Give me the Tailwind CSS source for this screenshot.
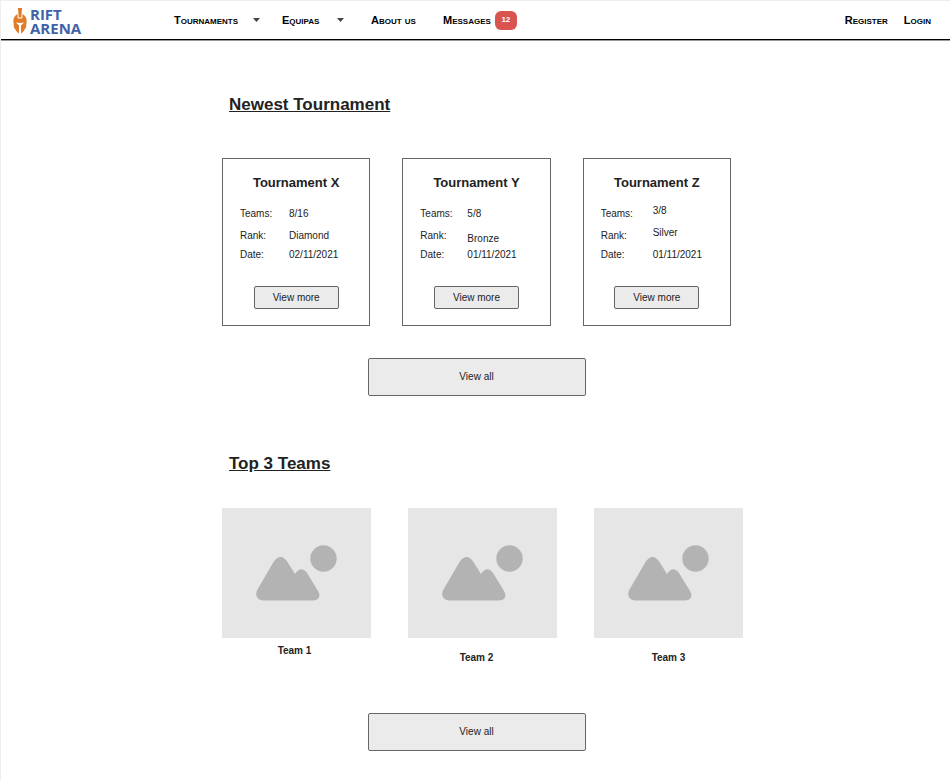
<!DOCTYPE html>
<html lang="en">
<head>
<meta charset="utf-8">
<meta name="viewport" content="width=device-width, initial-scale=1">
<title>Rift Arena</title>
<script src="https://cdn.jsdelivr.net/npm/@tailwindcss/browser@4"></script>
</head>
<body class="min-h-screen border-l border-t border-[#eeeeee] bg-white font-['Liberation_Sans',Arial,sans-serif] text-[10px] leading-4 text-[#222222]">
<svg class="hidden" aria-hidden="true">
  <symbol id="placeholder" viewBox="0 0 149 130">
    <rect width="149" height="130" fill="#e6e6e6"/>
    <circle cx="101.500" cy="50.500" r="13.200" fill="#b3b3b3"/>
    <path fill="#b3b3b3" d="M42 92.500C35 92.500 32.500 87 35.500 81.500L51.500 54Q58.500 44 65.500 54L73 66Q79 57 85 65L96 83C99 88 97 92.500 91 92.500Z"/>
  </symbol>
</svg>

<header class="flex h-[39px] items-center border-b border-black pr-[19px] pl-3 text-[11px] font-bold text-black shadow-[0_1px_0_#999999] [font-variant:small-caps]">
  <a href="#" aria-label="Rift Arena" class="flex w-[161px] shrink-0 items-center gap-[3px] pt-[2px]">
    <svg class="h-[26px] w-[14px]" viewBox="0 0 14 26" fill="#e07b28" aria-hidden="true">
      <path d="M5 0h4L8.300 9.500H5.700Z"/>
      <path d="M4.500 6C1.500 7.500 0 10.500 .4 14L1 19.500 4 24l2 1.500V17.500L3 14.500l4 .6 4-.6L8 17.500v8L10 24l3-4.500.6-5.500C14 10.500 12.500 7.500 9.500 6L9.300 10.500H4.700Z"/>
    </svg>
    <span class="font-['Open_Sans',sans-serif] text-[15px] leading-[14px] font-bold text-[#3f62a8] [font-variant:normal]">RIFT<br>ARENA</span>
  </a>
  <nav class="flex items-center">
    <button type="button" aria-haspopup="menu" class="flex w-[108px] items-center gap-[15px] [font-variant:inherit]">Tournaments
      <svg class="h-1 w-[7px]" viewBox="0 0 7 4" aria-hidden="true"><path d="M0 0h7L3.500 4Z" fill="#444444"/></svg></button>
    <button type="button" aria-haspopup="menu" class="flex w-[89px] items-center gap-[18px] [font-variant:inherit]">Equipas
      <svg class="h-1 w-[7px]" viewBox="0 0 7 4" aria-hidden="true"><path d="M0 0h7L3.500 4Z" fill="#444444"/></svg></button>
    <a href="#" class="w-[72px]">About us</a>
    <a href="#" class="flex items-center gap-1">Messages
      <span class="flex h-[19px] w-[22px] items-center justify-center rounded-md bg-[#d9534f] text-[8px] text-white">12</span></a>
  </nav>
  <div class="ml-auto flex gap-4">
    <a href="#">Register</a>
    <a href="#">Login</a>
  </div>
</header>

<main class="mx-auto max-w-[513px] pt-[55px] pr-px pb-7 pl-[3px]">
  <section>
    <h2 class="pl-[7px] text-[17px] leading-5 font-bold underline">Newest Tournament</h2>
    <div class="mt-[43px] grid grid-cols-3 gap-8">
      <article class="flex flex-col items-center border border-[#666666] pt-[14px] pb-4">
        <h3 class="text-[13px] leading-5 font-bold">Tournament X</h3>
        <dl class="mt-[10px] grid w-full grid-cols-[49px_1fr] grid-rows-[22px_22px_16px] items-center pl-[17px]">
          <dt>Teams:</dt><dd>8/16</dd>
          <dt>Rank:</dt><dd>Diamond</dd>
          <dt>Date:</dt><dd>02/11/2021</dd>
        </dl>
        <button type="button" class="mt-[23px] h-[23px] w-[85px] rounded-xs border border-[#666666] bg-[#ebebeb]">View more</button>
      </article>
      <article class="flex flex-col items-center border border-[#666666] pt-[14px] pb-4">
        <h3 class="text-[13px] leading-5 font-bold">Tournament Y</h3>
        <dl class="mt-[10px] grid w-full grid-cols-[47px_1fr] grid-rows-[22px_22px_16px] items-center pl-[17px]">
          <dt>Teams:</dt><dd>5/8</dd>
          <dt>Rank:</dt><dd class="self-end">Bronze</dd>
          <dt>Date:</dt><dd>01/11/2021</dd>
        </dl>
        <button type="button" class="mt-[23px] h-[23px] w-[85px] rounded-xs border border-[#666666] bg-[#ebebeb]">View more</button>
      </article>
      <article class="flex flex-col items-center border border-[#666666] pt-[14px] pb-4">
        <h3 class="text-[13px] leading-5 font-bold">Tournament Z</h3>
        <dl class="mt-[10px] grid w-full grid-cols-[52px_1fr] grid-rows-[22px_22px_16px] items-center pl-[17px]">
          <dt>Teams:</dt><dd class="self-start">3/8</dd>
          <dt>Rank:</dt><dd class="self-start">Silver</dd>
          <dt>Date:</dt><dd>01/11/2021</dd>
        </dl>
        <button type="button" class="mt-[23px] h-[23px] w-[85px] rounded-xs border border-[#666666] bg-[#ebebeb]">View more</button>
      </article>
    </div>
    <button type="button" class="mx-auto mt-8 block h-[38px] w-[218px] rounded-xs border border-[#666666] bg-[#ebebeb]">View all</button>
  </section>

  <section class="mt-[58px]">
    <h2 class="pl-[7px] text-[17px] leading-5 font-bold underline">Top 3 Teams</h2>
    <div class="mt-[34px] -mr-3 grid grid-cols-3 gap-[37px] font-bold">
      <figure>
        <svg class="aspect-[149/130] w-full" role="img" aria-label="Team 1"><use href="#placeholder"/></svg>
        <figcaption class="mt-[5px] pr-1 text-center">Team 1</figcaption>
      </figure>
      <figure>
        <svg class="aspect-[149/130] w-full" role="img" aria-label="Team 2"><use href="#placeholder"/></svg>
        <figcaption class="mt-3 pr-3 text-center">Team 2</figcaption>
      </figure>
      <figure>
        <svg class="aspect-[149/130] w-full" role="img" aria-label="Team 3"><use href="#placeholder"/></svg>
        <figcaption class="mt-3 text-center">Team 3</figcaption>
      </figure>
    </div>
    <button type="button" class="mx-auto mt-[47px] block h-[38px] w-[218px] rounded-xs border border-[#666666] bg-[#ebebeb]">View all</button>
  </section>
</main>
</body>
</html>
